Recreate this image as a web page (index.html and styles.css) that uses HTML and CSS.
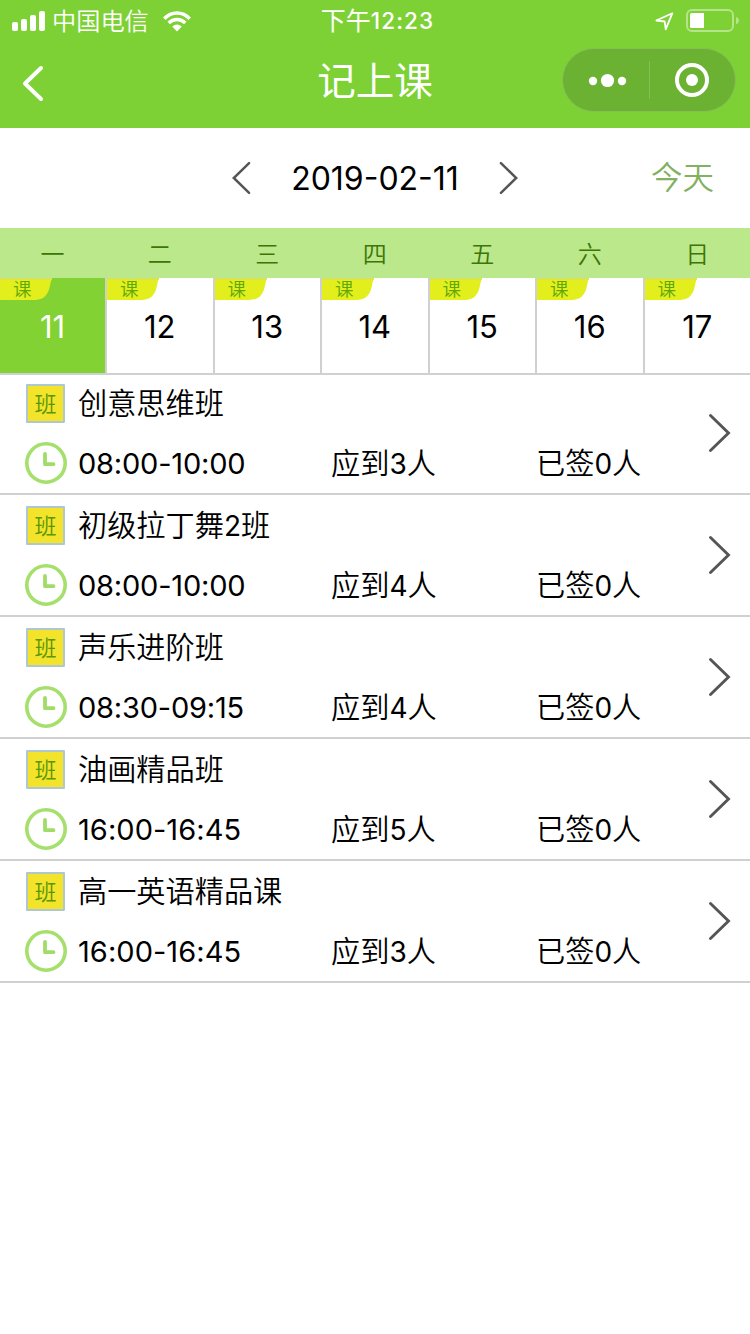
FILE: index.html
```html
<!DOCTYPE html>
<html lang="zh-CN">
<head>
<meta charset="utf-8">
<title>记上课</title>
<link rel="stylesheet" href="styles.css">
</head>
<body>
<svg class="defs" width="0" height="0">
  <symbol id="arrow" viewBox="0 0 24 40"><path d="M2.500 2.500 20.500 20 2.500 37.500" fill="none" stroke="#555" stroke-width="2.900" stroke-linecap="round"/></symbol>
  <symbol id="clock" viewBox="0 0 44 44"><circle cx="22" cy="22" r="19.200" fill="none" stroke="#a5df6c" stroke-width="3.600"/><path d="M21 13v10.200h8.500" fill="none" stroke="#a0dc68" stroke-width="3.800" stroke-linecap="round" stroke-linejoin="round"/></symbol>
  <symbol id="flag" viewBox="0 0 52 22"><path d="M0 1H52C50 4 50.500 9 48 14C45 20 41 22 33 22H0Z" fill="#e2ef1c"/><path d="M0 .7H52" stroke="#d9df63" stroke-width="1.400"/></symbol>
</svg>
<header class="header">
  <div class="status">
    <div class="status-left">
      <svg width="34" height="20" viewBox="0 0 34 20" fill="#fff"><rect y="11" width="6" height="9" rx="2"/><rect x="9" y="8" width="6" height="12" rx="2"/><rect x="18" y="4" width="6" height="16" rx="2"/><rect x="27" width="6" height="20" rx="2"/></svg>
      <span class="carrier">中国电信</span>
      <svg class="wifi" width="28" height="21" viewBox="0 0 28 21"><g fill="none" stroke="#fff" stroke-width="3.500"><path d="M1.300 7.700C8.500.1 19.500.1 26.700 7.700"/><path d="M5.700 12.100C10.500 7.300 17.500 7.300 22.300 12.100"/></g><path d="M9.200 15.600Q14 11.500 18.800 15.600L14 20.500Z" fill="#fff"/></svg>
    </div>
    <span class="time">下午<em>12:23</em></span>
    <div class="status-right">
      <svg width="19" height="19" viewBox="0 0 19 19"><path d="M17.300 1.300 1.300 8.500 9.700 9.500 10.700 17.300Z" fill="none" stroke="#fff" stroke-width="1.800" stroke-linejoin="round"/></svg>
      <svg width="54" height="24" viewBox="0 0 54 24"><rect x="1" y="1" width="46" height="21" rx="5" fill="none" stroke="#b5e48b" stroke-width="2"/><path d="M5.500 4H18V19H5.500Q4 19 4 17.500V5.500Q4 4 5.500 4Z" fill="#fff"/><path d="M50 8Q53 9 53 11.500T50 15.500Z" fill="#b5e48b"/></svg>
    </div>
  </div>
  <nav class="nav">
    <svg class="back" width="24" height="38" viewBox="0 0 24 38"><path d="M20 3 4 18.500 20 34" fill="none" stroke="#fff" stroke-width="4" stroke-linecap="round" stroke-linejoin="round"/></svg>
    <h1 class="title">记上课</h1>
    <div class="capsule">
      <svg width="172" height="62" viewBox="0 0 172 62"><g fill="#fff"><circle cx="30" cy="32" r="4.200"/><circle cx="44.500" cy="31.500" r="6.600"/><circle cx="59" cy="32" r="4.200"/><circle cx="129" cy="31" r="6"/></g><circle cx="129" cy="31" r="15" fill="none" stroke="#fff" stroke-width="4"/><path d="M86.500 12V50" stroke="#85c057"/></svg>
    </div>
  </nav>
</header>
<section class="datebar">
  <div class="picker">
    <svg class="step prev"><use href="#arrow"/></svg>
    <span class="date">2019-02-11</span>
    <svg class="step"><use href="#arrow"/></svg>
  </div>
  <a class="today">今天</a>
</section>
<div class="week names"><span>一</span><span>二</span><span>三</span><span>四</span><span>五</span><span>六</span><span>日</span></div>
<div class="week days">
  <div class="day active"><span class="tag"><svg><use href="#flag"/></svg><b>课</b></span><span class="num">11</span></div>
  <div class="day"><span class="tag"><svg><use href="#flag"/></svg><b>课</b></span><span class="num">12</span></div>
  <div class="day"><span class="tag"><svg><use href="#flag"/></svg><b>课</b></span><span class="num">13</span></div>
  <div class="day"><span class="tag"><svg><use href="#flag"/></svg><b>课</b></span><span class="num">14</span></div>
  <div class="day"><span class="tag"><svg><use href="#flag"/></svg><b>课</b></span><span class="num">15</span></div>
  <div class="day"><span class="tag"><svg><use href="#flag"/></svg><b>课</b></span><span class="num">16</span></div>
  <div class="day"><span class="tag"><svg><use href="#flag"/></svg><b>课</b></span><span class="num">17</span></div>
</div>
<main class="list">
  <article class="row"><div class="info">
    <div class="line"><i class="badge">班</i><span class="name">创意思维班</span></div>
    <div class="line detail"><svg class="clock"><use href="#clock"/></svg><span class="hours">08:00-10:00</span><span class="due">应到<em>3</em>人</span><span class="signed">已签<em>0</em>人</span></div>
  </div><svg class="more"><use href="#arrow"/></svg></article>
  <article class="row"><div class="info">
    <div class="line"><i class="badge">班</i><span class="name">初级拉丁舞<em>2</em>班</span></div>
    <div class="line detail"><svg class="clock"><use href="#clock"/></svg><span class="hours">08:00-10:00</span><span class="due">应到<em>4</em>人</span><span class="signed">已签<em>0</em>人</span></div>
  </div><svg class="more"><use href="#arrow"/></svg></article>
  <article class="row"><div class="info">
    <div class="line"><i class="badge">班</i><span class="name">声乐进阶班</span></div>
    <div class="line detail"><svg class="clock"><use href="#clock"/></svg><span class="hours">08:30-09:15</span><span class="due">应到<em>4</em>人</span><span class="signed">已签<em>0</em>人</span></div>
  </div><svg class="more"><use href="#arrow"/></svg></article>
  <article class="row"><div class="info">
    <div class="line"><i class="badge">班</i><span class="name">油画精品班</span></div>
    <div class="line detail"><svg class="clock"><use href="#clock"/></svg><span class="hours late">16:00-16:45</span><span class="due">应到<em>5</em>人</span><span class="signed">已签<em>0</em>人</span></div>
  </div><svg class="more"><use href="#arrow"/></svg></article>
  <article class="row"><div class="info">
    <div class="line"><i class="badge">班</i><span class="name">高一英语精品课</span></div>
    <div class="line detail"><svg class="clock"><use href="#clock"/></svg><span class="hours late">16:00-16:45</span><span class="due">应到<em>3</em>人</span><span class="signed">已签<em>0</em>人</span></div>
  </div><svg class="more"><use href="#arrow"/></svg></article>
</main>
</body>
</html>
```
FILE: styles.css
```css
* { box-sizing: border-box; }
body { margin: 0; background: #fff; color: #000; font-family: Inter, "Noto Sans CJK SC DemiLight", "Noto Sans CJK SC", sans-serif; font-weight: 350; }
svg { display: block; flex: none; }
.defs { position: absolute; }
i, em { font-style: normal; }
b { font-weight: 400; }

.header { height: 128px; background: #7dd135; color: #fff; }
.status { height: 40px; display: grid; grid-template-columns: 1fr auto 1fr; align-items: center; padding: 0 10px 0 12px; }
.status-left { display: flex; align-items: center; }
.carrier { margin-left: 6px; padding-top: 2px; font-size: 24.2px; line-height: 40px; }
.wifi { margin-left: 14px; }
.time { font-family: Inter, "Noto Sans CJK SC", sans-serif; font-size: 25px; line-height: 40px; padding: 0 0 0 3px; font-weight: 400; }
.time em { font-size: 22.5px; font-weight: 500; letter-spacing: 1.1px; position: relative; top: -1px; }
.status-right { display: flex; align-items: center; justify-content: flex-end; gap: 12px; }
.nav { height: 88px; display: grid; grid-template-columns: 188px 1fr 188px; align-items: start; }
.back { margin: 25px 0 0 21px; }
.title { margin: 12px 0 0; font-family: "Noto Sans CJK SC", sans-serif; font-size: 38.5px; line-height: 52px; font-weight: 400; text-align: center; }
.capsule { width: 174px; height: 64px; margin-top: 8px; border: 1px solid #86bf57; border-radius: 32px; background: #6bb132; }

.datebar { height: 100px; display: grid; grid-template-columns: 1fr auto 1fr; align-items: center; }
.picker { grid-column: 2; display: flex; align-items: center; justify-content: space-between; width: 290px; }
.step { width: 22px; height: 34px; }
.prev { transform: scaleX(-1); }
.date { padding-top: 1px; font-size: 32px; font-weight: 400; line-height: 40px; }
.today { justify-self: end; margin-right: 36px; font-size: 31.5px; line-height: 40px; color: #83b061; }

.week { display: grid; grid-template-columns: 105px repeat(6, 107.5px); }
.names { height: 50px; padding-top: 3px; background: #bae88a; color: #3e7507; font-size: 24px; line-height: 48px; text-align: center; }
.names span:not(:first-child) { padding-left: 2px; }
.days { height: 97px; border-bottom: 2px solid #d0d0d0; }
.day { position: relative; display: flex; align-items: center; justify-content: center; padding-top: 1px; font-size: 31px; font-weight: 400; }
.day + .day { border-left: 2px solid #d0d0d0; }
.active { background: #82d233; color: #fff; }
.tag { position: absolute; left: 0; top: 0; width: 52px; height: 22px; }
.tag svg { width: 52px; height: 22px; }
.tag b { position: absolute; left: 13px; top: 1px; font-size: 18.5px; line-height: 20px; color: #5ea80b; }

.list { margin-top: -2px; font-size: 29.2px; }
.row { height: 122px; border-bottom: 2px solid #d0d0d0; display: flex; justify-content: space-between; padding: 0 18px 0 24px; }
.info { display: flex; flex-direction: column; }
.line { height: 60px; display: flex; align-items: center; line-height: 56px; }
.badge { width: 39px; height: 39px; margin: 0 13px 0 2px; border: 2px solid #afc8d0; border-radius: 1px; background: #f3e42b; color: #599707; font-size: 22px; line-height: 36px; text-align: center; }
.name, .due, .signed { padding-top: 1px; }
.line em { font-size: 28px; font-weight: 400; }
.clock { width: 44px; height: 44px; margin-right: 10px; }
.hours { width: 253px; padding-top: 1px; font-size: 29px; font-weight: 400; letter-spacing: -.2px; }
.late { letter-spacing: .05px; }
.due { width: 205px; }
.more { width: 24px; height: 40px; margin-top: 40px; }
```
